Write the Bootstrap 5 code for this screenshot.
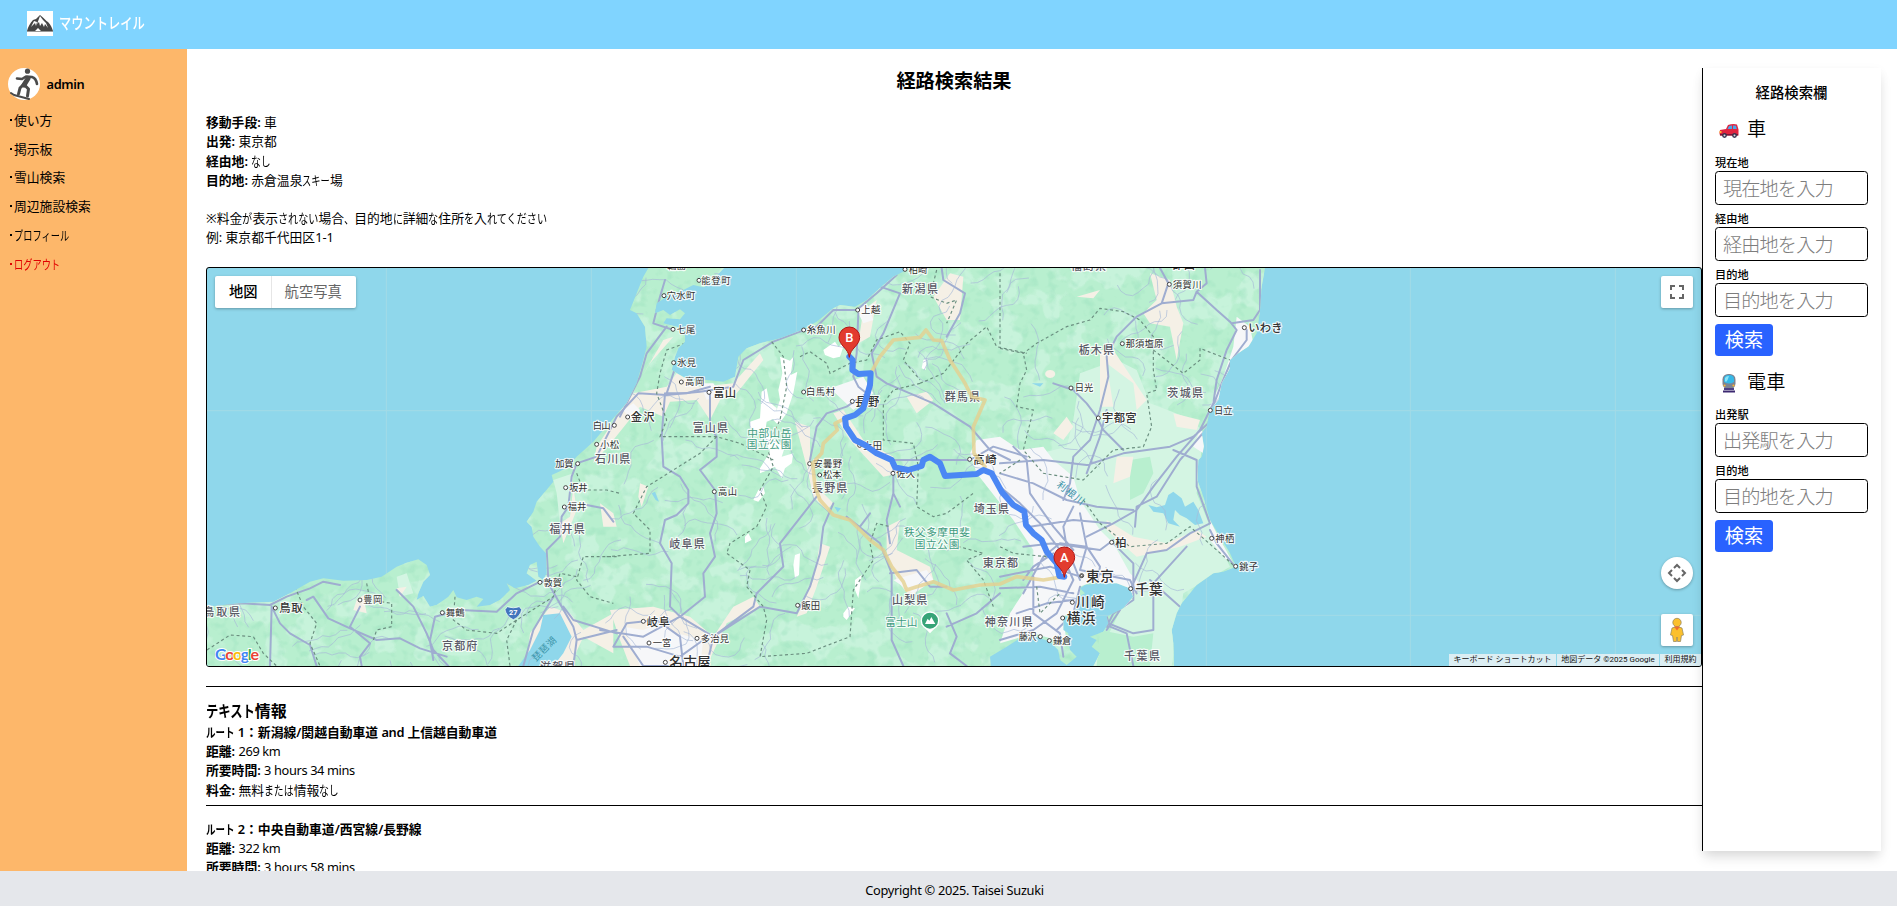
<!DOCTYPE html>
<html lang="ja">
<head>
<meta charset="utf-8">
<meta name="viewport" content="width=device-width, initial-scale=1">
<title>マウントレイル</title>
<link href="https://cdn.jsdelivr.net/npm/bootstrap@5.3.0/dist/css/bootstrap.min.css" rel="stylesheet">
<style>
html{font-size:12.8px}
body{font-family:"Noto Sans","Noto Sans CJK JP",sans-serif;font-size:12.8px;line-height:19.3px;color:#000;background:#fff;height:100vh;overflow:hidden}
b,.semi{font-weight:600}
/* condensed kana: --n is the number of characters, --s the width factor */
.k{display:inline-block;--s:.77;transform:scaleX(var(--s));transform-origin:0 50%;margin-right:calc(var(--n)*(var(--s) - 1)*1em);white-space:nowrap}
.k1{--n:1}.k2{--n:2}.k3{--n:3}.k4{--n:4}.k5{--n:5}.k6{--n:6}.k7{--n:7}
.en{letter-spacing:-.36px}
.top-bar{height:49px;background:#80d4ff;padding:0 0 2px 27px}
.brand{color:#fff;font-size:15.6px;font-weight:500;margin-left:6px;--s:.785!important}
.side{width:187px;background:#fdb76a;padding:19px 8px 0}
.side a{color:#000;text-decoration:none;height:28.8px;line-height:28.8px;display:block;white-space:nowrap}
.side a .k{--s:.72}
.side a::before{content:"";display:inline-block;width:2px;height:2px;background:currentColor;margin:0 2px 4px 2px}
.side a.out{color:#e10000}
.side .user{height:32px;margin-bottom:5.800px}
.side .user .semi{margin-left:6.500px;padding-top:2px}
.results{padding:18px 0 0 19px;overflow:hidden}
.results h1{font-size:19.2px;line-height:27px;font-weight:600;margin:0 0 19px}
.note{margin:19px 0 19.4px}
.note .k{--s:.79}
.map-box{height:400px;border:1px solid #000;border-radius:3px;background:#8fd7eb;position:relative;overflow:hidden}
.map-box>svg.canvas{width:100%;height:100%;display:block}
.ctl{position:absolute;background:#fff;box-shadow:0 1px 3px rgba(0,0,0,.3);border-radius:2px}
.ctl svg{display:block}
.sq{width:32px;height:32px}
.kind{left:8px;top:8px;height:32px;font-size:14.3px;color:#666;font-family:Roboto,"Noto Sans CJK JP",sans-serif}
.kind span{line-height:32px;padding:0 14px 0 14px}
.kind span+span{border-left:1px solid #e6e6e6;padding:0 14px 0 13px}
.kind .on{font-weight:500;color:#000;padding-right:13px}
.legal{position:absolute;right:0;bottom:0;height:12px;font:8px/12px Roboto,"Noto Sans CJK JP",sans-serif;color:#111}
.legal span{background:rgba(245,245,245,.75);text-align:center;white-space:nowrap}
.rule{border-top:1px solid #000;margin:0}
.panel{width:179px;margin:19px 16px 20px 0;border-left:1px solid #000;padding:14px 13px 0 12px;box-shadow:0 8px 12px -2px rgba(0,0,0,.13),0 2px 10px rgba(0,0,0,.04);background:#fff;position:relative}
.panel h2{font-size:14.4px;line-height:22px;font-weight:500;margin:0 0 10px;text-align:center}
.mode{font-size:19.2px;height:29px;line-height:29px;font-weight:350}
.mode svg{width:20px;height:20px;margin:2px 8px 0 4px}
.panel label{display:block;font-size:11.2px;line-height:16px;height:16px;font-weight:500}
.panel .form-control{height:34px;border:1px solid #000;border-radius:3.5px;padding:0 7px;font-size:19.2px;line-height:30px;margin-bottom:6px;letter-spacing:-.9px;color:#000}
.panel .form-control::placeholder{color:#7d7d7d;opacity:1;font-weight:300}
.panel .btn{background:#2962ff;color:#fff;height:32px;width:58px;border:0;border-radius:3.5px;padding:0;font-size:19.2px;line-height:30px;margin-top:7px;display:block}
.panel .form-control:has(+.btn){margin-bottom:0}
.foot{height:35px;background:#e5e7eb;line-height:19px;letter-spacing:-.3px;padding-left:12px}
.lbl text{paint-order:stroke;stroke:#fff;stroke-opacity:.85;stroke-width:7px;stroke-linejoin:round;font-family:Roboto,"Noto Sans CJK JP",sans-serif;fill:#4a4a4a}
.lbl .city{fill:#333}.lbl .big{fill:#333;font-weight:500}.lbl .pref{fill:#5a5a66;font-weight:500}
.lbl .park{fill:#3f9b7f}.lbl .water{fill:#3a93a8;stroke:none}
.lbl circle{fill:#fff;stroke:#444;stroke-width:3}
</style>
</head>
<body class="d-flex flex-column">
<header class="top-bar d-flex align-items-center flex-shrink-0">
  <svg width="26" height="25" viewBox="0 0 26 25"><path fill="#fff" d="M0 0h26v25H0z"/><path fill="#454545" d="M0 20c1-4 3-8 6-11l3-1 4-4c4 3 6 6 8 7 3 3 4 6 5 9z"/><path fill="#fff" d="m13 5 3 4 3 3 2 5-3-4-1 3-2-4-2 3-1-4-2 2zM7 10l-3 6 4-4 1 3 1-4zM8 20l3-3 3 3z"/><path stroke="#999" d="M0 20.500h26"/></svg>
  <span class="brand k k7">マウントレイル</span>
</header>
<div class="d-flex flex-grow-1 overflow-hidden">
  <nav class="side flex-shrink-0">
    <div class="user d-flex align-items-center">
      <svg width="32" height="32" viewBox="0 0 32 32"><circle cx="16" cy="16" r="16" fill="#fff"/><circle cx="19.500" cy="3.200" r="2.600" fill="#4a4a4a"/><g fill="none" stroke="#4a4a4a" stroke-linecap="round" stroke-linejoin="round"><path stroke-width="2.600" d="m9 10.500 5 .5 4-2.500 6 .5q4 1 5 7"/><path stroke-width="5" d="m20 10.500-4 6.500"/><path stroke-width="3" d="m16 16-4 4-1.500 6m6-9 4 4-1 7"/><path stroke-width="2" d="m3 25 3 2 15 4"/></g></svg>
      <span class="semi en">admin</span>
    </div>
    <a href="#">使い方</a>
    <a href="#">掲示板</a>
    <a href="#">雪山検索</a>
    <a href="#">周辺施設検索</a>
    <a href="#"><span class="k k6">プロフィール</span></a>
    <a href="#" class="out"><span class="k k5">ログアウト</span></a>
  </nav>
  <main class="results flex-grow-1">
    <h1 class="text-center">経路検索結果</h1>
    <div><b>移動手段:</b> 車</div>
    <div><b>出発:</b> 東京都</div>
    <div><b>経由地:</b> <span class="k k2">なし</span></div>
    <div><b>目的地:</b> 赤倉温泉<span class="k k3" style="--s:.72">スキー</span>場</div>
    <div class="note">※料金<span class="k k1">が</span>表示<span class="k k4">されない</span>場合<span class="k k1">、</span>目的地<span class="k k1">に</span>詳細<span class="k k1">な</span>住所<span class="k k1">を</span>入<span class="k k6">れてください</span><br>例: 東京都千代田区1-1</div>
    <div class="map-box">
      <svg class="canvas" viewBox="21 24 4482 1194" preserveAspectRatio="none">
        <defs>
          <clipPath id="landclip"><use href="#land"/></clipPath>
          <filter id="patches" x="0" y="0" width="1" height="1" color-interpolation-filters="sRGB"><feTurbulence type="fractalNoise" baseFrequency=".011" numOctaves="3" seed="8"/><feColorMatrix values="0 0 0 0 .79  0 0 0 0 .955  0 0 0 0 .865  14 0 0 0 -7.300"/></filter>
          <filter id="relief" x="0" y="0" width="1" height="1" color-interpolation-filters="sRGB"><feTurbulence type="fractalNoise" baseFrequency=".035" numOctaves="2" seed="3"/><feColorMatrix values="0 0 0 0 .58  0 0 0 0 .87  0 0 0 0 .73  0 4 0 0 -2.100"/></filter>
        </defs>
        <g fill="none" stroke="#a3dbe6" stroke-width="3"><path d="M559 24V1218M1174 24V1218M1789 24V1218M3019 24V1218M3631 24V1218M4246 24V1218M21 452H4503M21 1066H4503"/></g>
        <path id="land" fill="#b8efcf" d="M21 1040 120 1030 220 1025 270 1000 330 965 370 955 430 962 500 960 545 950 590 920 620 908 655 898 680 915 690 945 670 965 655 1000 650 1020 670 1008 690 1040 710 1035 745 1010 760 990 770 1012 800 1020 830 1010 850 1017 830 1040 870 1035 900 1020 930 990 920 970 945 985 985 975 1010 962 980 940 990 915 1010 905 1015 950 1030 960 1040 940 1038 880 1020 860 1000 830 995 800 980 785 1000 755 1010 725 1060 665 1055 645 1100 625 1130 590 1180 545 1240 475 1280 430 1310 370 1330 300 1340 260 1335 200 1310 160 1290 150 1310 100 1330 50 1345 24H1572L1555 42 1530 70 1510 82 1480 75 1450 90 1400 110 1370 130 1365 160 1390 150 1410 165 1440 148 1455 160 1440 178 1400 175 1390 190 1430 200 1455 220 1455 245 1435 265 1425 290 1415 330 1440 345 1470 360 1520 360 1570 365 1605 350 1610 320 1615 290 1640 265 1680 250 1740 235 1800 212 1850 185 1900 145 1920 135 1965 140 2000 120 2050 75 2080 50 2110 35 2125 24H3195L3185 80 3180 150 3175 190 3170 220 3145 260 3115 280 3090 300 3090 325 3065 370 3055 420 3030 450 3020 500 3005 520 3012 560 3005 590 2995 600 2992 660 3010 710 3030 780 3060 830 3090 880 3108 920 3070 935 3040 940 2990 975 2945 1030 2930 1060 2915 1110 2920 1150 2922 1218H2680L2700 1180 2675 1160 2690 1140 2670 1130 2710 1115 2725 1090 2720 1070 2770 1045 2800 1010 2790 985 2750 970 2700 970 2655 975 2640 985 2655 1000 2635 1010 2640 1040 2615 1060 2590 1075 2590 1110 2605 1120 2605 1140 2610 1170 2630 1190 2600 1215 2580 1200 2575 1170 2550 1145 2510 1130 2460 1135 2420 1160 2370 1190 2372 1218H21z"/>
        <g clip-path="url(#landclip)">
          <rect x="21" y="24" width="3200" height="1194" filter="url(#patches)" opacity=".85"/>
          <rect x="21" y="24" width="3200" height="1194" filter="url(#relief)" opacity=".35"/>
          <g fill="#d4f5e3">
            <path d="M2400 600 2480 590 2600 560 2620 480 2640 340 2750 300 2810 330 2850 430 2980 480 3010 520 2990 700 3030 800 3090 920 2950 1000 2915 1218H2680L2790 990 2640 850 2600 700z"/>
            <path d="M1060 660 1120 640 1110 730 1080 790 1070 700zM590 950 620 940 640 1000 600 1010z"/>
          </g>
          <path fill="#b8efcf" d="M2790 600 2850 590 2860 640 2830 700 2790 720zM2700 1110 2800 1130 2860 1120 2850 1218H2690z"/>
          <g fill="#f5f0e6">
            <path d="M1190 560 1250 470 1300 400 1400 380 1430 340 1500 380 1600 370 1680 280 1690 300 1610 400 1560 420 1530 480 1490 420 1410 425 1390 470 1320 440 1240 540 1180 610zM1390 240 1420 230 1350 310 1320 360zM1785 485 1830 500 1830 600 1860 690 1900 730 1880 750 1840 710 1820 620zM1900 460 1930 450 1990 540 2080 590 2100 640 2050 650 1950 540zM2060 800 2100 780 2090 870 2190 920 2200 960 2130 1010 2090 960 2060 880zM1860 850 1890 860 1850 980 1820 1060 1790 1070 1840 960zM1230 1050 1360 1040 1470 1070 1540 1130 1600 1040 1660 1010 1680 1040 1580 1090 1520 1218H1290L1260 1140zM2120 410 2180 395 2200 420 2150 460zM2200 110 2250 40 2290 50 2280 180 2240 180zM1990 150 2030 120 2010 230 1975 250zM1320 670 1345 680 1325 740 1315 710z"/>
            <path d="M2850 40 2910 60 2930 140 2950 190 2930 300 2910 200 2850 190 2830 160 2870 120zM2700 270 2740 270 2840 420 2810 450 2800 370 2720 310 2740 440 2700 440zM2750 590 2800 590 2790 650 2740 670zM2720 780 2800 830 2900 850 2990 810 3020 830 2940 860 2810 890 2720 810zM2600 470 2620 500 2590 540 2560 520zM2920 460 3000 480 2990 510 2930 500zM2630 110 2700 90 2680 115zM2550 330a15 12 0 1 0 1 0zM1080 790 1110 770 1120 680 1130 750 1090 850zM1200 730 1240 760 1250 800 1210 800zM470 1020 490 1005 500 1060 460 1050zM590 985 620 980 600 1010z"/>
            <path d="M990 1120 1050 1040 1110 1060 1150 1110 1240 1060V1180L1150 1130 1110 1218H980z"/>
          </g>
          <g fill="#f6f7f9">
            <path d="M2400 530 2460 570 2530 560 2560 600 2620 650 2640 720 2700 810 2740 850 2790 940 2820 970 2780 1040 2690 960 2640 980 2640 1040 2590 1070 2600 1150 2500 1120 2400 1150 2430 1060 2500 950 2500 870 2440 780 2330 640 2310 580 2330 540z"/>
            <path d="M1270 1100 1330 1110 1380 1090 1430 1120 1510 1140 1500 1218H1320zM1890 385 1990 350 2020 400 1960 450zM2080 960 2180 930 2200 960 2140 1000zM1970 150 2000 130 2020 180 1990 190zM3110 170 3150 200 3160 250 3100 290 3080 350 3050 440 3030 440 3070 350 3100 260zM3000 510 3015 520 3010 580 2980 560zM3030 780 3055 830 3100 910 3080 900 3030 840zM1270 450 1300 430 1320 450 1300 490zM1500 370 1540 370 1560 400 1520 420z"/>
            <path fill="#fff" d="m1740 290 30 12 10-12-8 55 20-10-12 65-20 60-25 35-15-15 20-60-5-30 12-50zM1685 395l15-10 8 40 22 20-5 30-25 10-5 35 15 5 30 30 20-10-15 45 35-10-5 30-20 15-10 30-20-35-45 20 0-15 30-50-25-60-35-10 0-20 30-10zM1870 270l35-25 10 15 20-15-15 45-20 5-25-10zM1675 690l15-10 5 20-20 25-15-5zM1635 830l10-10 10 20-20 10zM1785 885l15-5-3 65-12 10-5-40zM1965 960l20-15-10 70-10-25zM1930 1060l15-20 20 5-25 35-10-10zM2170 300l12-5-5 35-12-5z"/>
          </g>
          <g fill="#8fd7eb">
            <path d="M1030 1065 1080 1060 1115 1130 1090 1180 1060 1218H955L990 1170 1020 1110zM2845 735 2870 742 2895 735 2905 705 2920 695 2945 715 2955 740 2980 725 2995 750 3010 790 2985 795 2960 775 2940 765 2925 750 2920 780 2940 800 2905 790 2890 760 2860 755zM2495 370 2530 370 2520 380zM1903 740l20 5-10 12zM1355 700l10-5 12 30-10-5z"/>
          </g>
          <g id="lanes" fill="none" stroke="#a7b9d8" stroke-width="2.500" opacity=".8"></g>
          <g fill="none" stroke="#9fadd0" stroke-width="6" stroke-linejoin="round" stroke-linecap="round">
            <path d="M21 1035 130 1030 210 1035 260 1010 330 985 370 965 420 975M215 1040 240 1090 270 1120 330 1155 350 1218M215 1040 210 1218M320 1020 340 1010 385 1075 450 1105 530 1140 600 1135 660 1165 740 1190M480 1040 450 1100 510 1150 480 1190 485 1218M590 990 640 1040 680 1120 700 1170 745 1218M700 1200 690 1140 705 1070 780 1050 890 1055 950 1000 1015 968 1045 960 1040 870 1080 830 1085 770 1105 740 1115 650 1130 610 1190 590 1250 470 1315 400 1400 405 1500 395 1600 380 1630 300 1720 245 1800 215 1850 200 1900 150 1970 150 2030 100 2090 45"/>
            <path d="M1045 970 1085 1040 1120 1100 1130 1140 1120 1218M1060 1010 1000 1110 970 1218M1130 1140 1250 1110M1160 735 1210 745 1240 785M1090 1040 1120 1080 1250 1120M1120 400 1090 440M1395 400 1385 530 1390 620 1440 650 1465 690 1465 730 1430 765 1395 780 1380 850 1415 910 1410 1040 1440 1070 1330 1130 1200 1110M1530 400 1530 500 1550 530 1550 590 1500 630 1545 690 1550 760 1530 820 1545 890 1510 940 1515 1010 1440 1070M1395 60 1380 110 1360 190 1420 210M1400 200 1340 280 1320 350 1260 470M1430 310 1400 400 1460 400 1530 380"/>
            <path d="M2020 24 2040 80 2100 100 2050 220 2015 280 2030 350 2060 370 2200 430 2310 500 2370 570 2430 600M2225 24 2230 60 2295 100 2280 160 2240 230M1975 160 1970 280 1960 350 1975 380 2000 400 1940 440 1880 460 1850 500 1830 600M1900 730 1870 800 1860 880 1830 980 1790 1060 1680 1040 1540 1130 1440 1070M1850 710 1740 850 1750 920 1670 1000 1660 1040 1540 1130 1520 1218M1940 770 2040 850 2075 940 2075 1140 2110 1218M2070 940 2150 930 2190 980 2240 980M2080 630 2080 700 2060 780 2070 850M2080 600 2210 600 2310 600 2380 560 2480 590M2240 1060 2270 1130 2250 1180 2300 1218M2240 1100 2330 1060 2400 1000M1270 1130 1330 1218 1450 1218 1440 1130 1370 1080 1280 1090 1240 1160 1340 1160 1440 1190 1510 1140M1980 800 2010 760M2080 700 2100 740"/>
            <path d="M2880 24 2905 70 2885 130 2810 170 2750 230 2720 290 2725 350 2700 450 2670 540 2620 590 2610 670 2590 720M3015 24 3020 70 2990 95 2980 120 2885 130M2990 95 3050 150 3090 185 3110 210 3080 270 3050 360 3040 430 3000 510 2930 590 2860 680 2810 750 2740 790 2660 830M3180 30 3180 150 3160 180 3095 190M3140 210 3140 240 3095 300 3065 370 3035 450 3025 490 2980 530 2910 560 2770 580 2660 615 2530 600 2400 610M2560 370 2620 390 2660 430 2690 470 2710 510 2770 570M2720 450 2700 530 2660 640M3025 500 2940 600 2870 710 2810 740 2805 800M2920 570 2990 600 2990 680 3030 790 2970 820 2900 870 2840 880 2800 970 2760 1050 2720 1110M3030 810 3050 850 3105 920M2740 850 2800 910 2800 1020 2740 1060 2720 1100M2700 1080 2800 1120 2860 1110 2860 970 2960 860M2640 1040 2720 1070 2730 1100 2780 1120 2800 1218M2850 960 2940 1040"/>
            <path d="M2400 640 2500 670 2600 720 2690 740 2800 750M2400 680 2460 730 2520 790 2580 870 2620 960M2620 740 2590 800 2600 860 2640 960M2640 760 2660 860 2640 930M2490 800 2620 780 2730 790M2470 860 2560 850 2700 870 2740 840M2470 1000 2530 890 2580 850 2660 860 2700 920 2690 980M2400 950 2550 920 2640 950M2400 985 2520 980 2620 1000M2450 1060 2540 1030 2620 1020M2400 1140 2500 1110 2570 1060 2620 960M2500 950 2500 1060 2580 1120 2590 1190M2640 930 2790 960 2810 1000M2640 980 2620 1060 2570 1110M2560 880 2500 920 2470 960M2440 560 2480 600 2490 700 2560 800 2620 870"/>
          </g>
          <path fill="none" stroke="#6b8f80" stroke-width="3.500" stroke-dasharray="9 8" d="M21 1170 90 1125 160 1130 190 1180 230 1218M285 980 310 1040 350 1090 330 1150 360 1218M500 970 510 1020 575 1030 575 1100 530 1110 520 1140M765 1010 760 1080 800 1110 890 1120 950 1080 1060 1010 1080 940 1130 950M950 1080 920 1140 930 1218M1130 640 1150 690 1220 690 1260 700M1250 890 1150 890 1130 960 1170 1010 1240 1030M1455 250 1400 270 1380 340 1370 400 1400 480 1380 530 1550 530 1620 550 1720 600M1715 245 1750 290 1760 380 1740 480 1700 560 1720 620 1680 690 1700 740 1670 800 1590 850 1580 880 1650 930 1640 980 1690 1040 1700 1080 1680 1190 1820 1180 1950 1130 1960 990 2020 900 2010 850 2030 790 2070 800M1550 530 1500 580 1340 680 1300 760 1350 810 1350 880 1220 890M1800 290 1830 275 1880 310 1890 340 1950 310 2000 300 2030 240 2100 215 2130 250 2110 300 2160 360M2160 370 2080 390 2050 430 2050 540 2140 550 2155 620 2150 740 2200 770 2240 760 2320 700M2160 370 2230 340 2300 250 2360 200 2390 260 2480 280M2240 850 2350 880 2300 900 2350 960 2380 1040M2400 265 2470 280 2510 250 2600 200 2670 180 2700 145 2770 155 2820 180 2860 230 2860 330 2870 390 2840 400 2855 500 2830 560 2740 570 2690 620 2650 660 2530 640 2470 570 2500 450 2450 440 2460 370 2480 330 2470 280M2860 270 2950 340 3000 300 3000 265 3090 300M2650 720 2700 790 2790 860 2900 850 2970 800 3050 870 3105 920M2400 40V260M2210 30 2190 110 2240 130 2270 120 2240 190M2460 600 2400 640M2400 860 2440 880 2540 890M2510 980 2520 1060 2580 1000"/>
        </g>
        <g class="lbl" id="labels"></g>
        <path fill="none" stroke="#e5cf8e" stroke-width="11" stroke-opacity=".8" stroke-linejoin="round" stroke-linecap="round" d="M2015 335 2040 290 2080 240 2160 232 2178 210 2200 240 2225 242 2250 300 2295 370 2315 410 2355 420 2320 500 2322 580 2355 620M1930 478 1905 490 1912 510 1870 550 1865 580 1838 610 1845 680 1860 720 1900 765 1950 780 2010 840 2050 870 2075 920 2110 965 2120 990 2150 980 2200 965 2260 990 2340 975 2400 972 2450 950 2530 960 2590 950"/>
        <path fill="none" stroke="#4b87f4" stroke-width="18" stroke-linejoin="round" stroke-linecap="round" d="M1948 290 1958 300 1957 330 1975 342 2012 340 2010 375 2000 410 1990 445 1965 465 1935 475 1938 500 1965 540 1995 555 2030 580 2075 600 2085 622 2125 630 2165 618 2170 600 2190 590 2220 610 2235 648 2330 642 2350 630 2375 640 2405 695 2440 735 2473 755 2478 795 2500 820 2525 840 2540 875 2570 910 2578 948 2593 950"/>
        <g transform="translate(840 1040)"><path fill="#4275bd" stroke="#fff" stroke-width="2" d="M82 0q18 7 36 0l7 9q-4 20-25 30-21-10-25-30z"/><text x="100" y="26" font-size="22" font-weight="700" fill="#fff" text-anchor="middle" font-family="Roboto">27</text></g>
        <g transform="translate(2190 1082)"><path fill="#fff" d="M-27 10 0 38 27 10z"/><circle r="26" fill="#37a478" stroke="#fff" stroke-width="4"/><path fill="#fff" d="M-15 10-7-6-2 0 4-11 16 10z"/></g>
        <g fill="#e23b2e" stroke="#b31412" stroke-width="3"><path d="M2593 952c-3-28-31-35-31-60a31 31 0 0 1 62 0c0 25-28 32-31 60zM1948 292c-3-28-31-35-31-60a31 31 0 0 1 62 0c0 25-28 32-31 60z"/></g>
        <g fill="#fff" font-family="Roboto" font-size="39" font-weight="500" text-anchor="middle"><text x="2593" y="905">A</text><text x="1948" y="245">B</text></g>
      </svg>
      <div class="ctl kind d-flex"><span class="on">地図</span><span>航空写真</span></div>
      <div class="ctl sq" style="right:8px;top:8px"><svg width="32" height="32" fill="none" stroke="#666" stroke-width="2"><path d="M10 14v-4h4M18 10h4v4M22 18v4h-4M14 22h-4v-4"/></svg></div>
      <div class="ctl sq rounded-circle" style="right:8px;bottom:77px"><svg width="32" height="32" fill="none" stroke="#666" stroke-width="2"><path d="m13 11 3-3 3 3M13 21l3 3 3-3M11 13l-3 3 3 3M21 13l3 3-3 3"/></svg></div>
      <div class="ctl sq" style="right:8px;bottom:20px"><svg width="32" height="32"><g fill="#fbc02d" stroke="#8d8360" stroke-width=".7"><path d="M11 14q5-3 10 0l1.500 7-2 .5-1 6h-3L16 23l-.5 4.500h-3l-1-6-2-.5z"/><circle cx="16" cy="8.500" r="4.200"/></g><path fill="#ef6c30" d="m13 12.500 3 4 3-4z"/></svg></div>
      <svg class="position-absolute" style="left:8px;bottom:1px" width="50" height="20"><text y="15" font-family="Lato" font-size="16" font-weight="700" stroke="#fff" stroke-width="2" paint-order="stroke" textLength="44"><tspan fill="#4285f4">G</tspan><tspan fill="#ea4335">o</tspan><tspan fill="#fbbc05">o</tspan><tspan fill="#4285f4">g</tspan><tspan fill="#34a853">l</tspan><tspan fill="#ea4335">e</tspan></text></svg>
      <div class="legal d-flex"><span style="width:107px">キーボード ショートカット</span><span style="width:102px;margin-left:1px">地図データ ©2025 Google</span><span style="width:41px;margin-left:1px">利用規約</span></div>
    </div>
    <hr class="rule opacity-100" style="margin-top:19px">
    <div style="font-size:16px;line-height:24px;margin-top:11.500px"><b><span class="k k4">テキスト</span>情報</b></div>
    <div><b><span class="k k3" style="--s:.74">ルート</span> 1：新潟線/関越自動車道 <span class="en">and</span> 上信越自動車道</b></div>
    <div><b>距離:</b> <span class="en">269 km</span></div>
    <div><b>所要時間:</b> <span class="en">3 hours 34 mins</span></div>
    <div><b>料金:</b> 無料<span class="k k3">または</span>情報<span class="k k2">なし</span></div>
    <hr class="rule opacity-100" style="margin-top:5px">
    <div style="margin-top:14px"><b><span class="k k3" style="--s:.74">ルート</span> 2：中央自動車道/西宮線/長野線</b></div>
    <div><b>距離:</b> <span class="en">322 km</span></div>
    <div><b>所要時間:</b> <span class="en">3 hours 58 mins</span></div>
  </main>
  <aside class="panel flex-shrink-0">
    <h2>経路検索欄</h2>
    <div class="mode d-flex align-items-center"><svg viewBox="0 0 20 20"><path fill="#e0243f" d="M1 10 7 9l2-4q5-1.500 9-.5l1.500 5v6H1q-1-3 0-5.500z"/><path fill="#4aa5e8" d="m8.500 9 1.500-3 3-.4V9zM14 5.500l3 .2.800 3.300H14z"/><path fill="#7b1738" d="M1 14h18v1.500H1z"/><circle cx="5.500" cy="15.500" r="2.400" fill="#39324e"/><circle cx="15.500" cy="15.500" r="2.400" fill="#39324e"/><circle cx="5.500" cy="15.500" r="1" fill="#ddd"/><circle cx="15.500" cy="15.500" r="1" fill="#ddd"/><path fill="#ffb52e" d="M.5 11h2v2h-2z"/></svg>車</div>
    <div style="height:12px"></div>
    <label>現在地</label><input class="form-control" placeholder="現在地を入力">
    <label>経由地</label><input class="form-control" placeholder="経由地を入力">
    <label>目的地</label><input class="form-control" placeholder="目的地を入力">
    <button class="btn">検索</button>
    <div style="height:11.400px"></div>
    <div class="mode d-flex align-items-center"><svg viewBox="0 0 20 20"><rect x="3.500" y="1" width="13" height="15" rx="5.500" fill="#7d8492"/><path fill="#35b8e8" d="M5 6q0-4 5-4t5 4v3q-5 3-10 0z"/><path fill="#8be3f7" d="M6 5q1-2 4-2-1 4-3 6l-1-1z"/><circle cx="5.500" cy="12.500" r="1.100" fill="#ffb52e"/><circle cx="14.500" cy="12.500" r="1.100" fill="#ffb52e"/><path fill="#4c3f86" d="M5 15h10v2H5z"/><path fill="#3b2870" d="M4 17.500h12v2H4z"/></svg>電車</div>
    <div style="height:11px"></div>
    <label>出発駅</label><input class="form-control" placeholder="出発駅を入力">
    <label>目的地</label><input class="form-control" placeholder="目的地を入力">
    <button class="btn">検索</button>
  </aside>
</div>
<footer class="foot d-flex align-items-center justify-content-center flex-shrink-0 position-relative"><span style="padding-top:3px">Copyright © 2025. Taisei Suzuki</span></footer>
<script src="https://cdn.jsdelivr.net/npm/bootstrap@5.3.0/dist/js/bootstrap.bundle.min.js"></script>
<script>
const NS = 'http://www.w3.org/2000/svg';
// [left, middle, text, width, class, town dot x]
const places = [
 [10,1056,'鳥取県',110,'pref'],[238,1044,'鳥取',70,'big',226],[490,1020,'豊岡',57,'city',480],[738,1058,'舞鶴',56,'city',727],
 [726,1157,'京都府',106,'pref'],[1031,967,'敦賀',55,'city',1020],[1048,808,'福井県',106,'pref'],[1103,741,'福井',56,'city',1093],
 [1108,683,'坂井',55,'city',1097],[1066,611,'加賀',55,'city',1133],[1185,597,'石川県',106,'pref'],[1201,553,'小松',56,'city',1190],
 [1178,496,'白山',54,'city',1243],[1292,471,'金沢',72,'big',1283],[1020,1222,'滋賀県',106,'pref'],
 [1504,61,'能登町',88,'city',1497],[1400,107,'穴水町',86,'city',1392],[1430,208,'七尾',56,'city',1419],[1432,308,'氷見',56,'city',1421],
 [1455,366,'高岡',58,'city',1444],[1540,397,'富山',68,'big',1527],[1478,503,'富山県',106,'pref'],[1642,520,'中部山岳',132,'park'],[1640,553,'国立公園',134,'park'],
 [1820,210,'糸魚川',87,'city',1811],[1984,150,'上越',57,'city',1973],[2106,87,'新潟県',108,'pref'],[2126,28,'柏崎',56,'city',2115],
 [1818,396,'白馬村',87,'city',1811],[1966,424,'長野',72,'big',1957],[1990,556,'上田',56,'city',1979],[1840,611,'安曇野',86,'city',1829],
 [1869,645,'松本',56,'city',1859],[1836,684,'長野県',106,'pref'],[2089,640,'佐久',56,'city',2079],[2234,411,'群馬県',106,'pref'],
 [2320,598,'高崎',70,'big',2309],[1554,695,'高山',57,'city',1543],[1408,851,'岐阜県',106,'pref'],[1340,1084,'岐阜',70,'big',1330],
 [1358,1149,'一宮',56,'city',1347],[1502,1135,'多治見',85,'city',1491],[1408,1207,'名古屋',124,'huge',1396],[1804,1036,'飯田',56,'city',1793],
 [2076,1021,'山梨県',106,'pref'],[2056,1087,'富士山',96,'park'],[2112,817,'秩父多摩甲斐',198,'park'],[2144,851,'国立公園',134,'park'],
 [2321,747,'埼玉県',106,'pref'],[2348,909,'東京都',106,'pref'],[2354,1087,'神奈川県',144,'pref'],[2456,1130,'藤沢',54,'city',2521],
 [2559,1142,'鎌倉',55,'city',2548],[2600,1074,'横浜',86,'huge',2588],[2628,1027,'川崎',86,'huge',2617],[2658,947,'東京',84,'huge',2645],
 [2806,986,'千葉',82,'huge',2792],[2746,847,'柏',34,'big',2735],[2772,1188,'千葉県',108,'pref'],[3046,835,'神栖',57,'city',3035],
 [3118,919,'銚子',56,'city',3107],[3042,451,'日立',56,'city',3031],[2902,400,'茨城県',107,'pref'],[2706,474,'宇都宮',104,'big',2695],
 [2624,384,'日光',56,'city',2613],[2636,270,'栃木県',106,'pref'],[2777,251,'那須塩原',113,'city',2767],[2918,73,'須賀川',87,'city',2908],
 [3145,203,'いわき',103,'big',3133],[2612,18,'福島県',106,'pref'],[2915,14,'郡山',70,'big'],[1402,18,'輪島',56,'city']
];
const size = {pref:33, city:28, big:34, huge:41, park:32, water:28};
const add = (tag, attrs, parent) => {
  const e = document.createElementNS(NS, tag);
  for (const k in attrs) e.setAttribute(k, attrs[k]);
  return parent.appendChild(e);
};
const layer = document.getElementById('labels');
for (const [x, y, t, w, c, dot] of places) {
  if (dot) add('circle', {cx:dot, cy:y, r: 6}, layer);
  const s = size[c];
  add('text', {x, y:y + s * .37, class: c === 'huge' ? 'big' : c, 'font-size':s, textLength:w}, layer).textContent = t;
}
add('circle', {cx:2645, cy:947, r:3.5}, layer);
add('text', {class:'water','font-size':28,textLength:88,transform:'translate(1008 1205) rotate(-45)'}, layer).textContent = '琵琶湖';
add('text', {class:'water','font-size':30,textLength:96,transform:'translate(2568 678) rotate(38)'}, layer).textContent = '利根川';
// local roads: seeded walks that bend gently across the land
let seed = 11;
const rnd = () => (seed = (seed * 16807) % 2147483647) / 2147483647;
let d = '';
for (let i = 0; i < 210; i++) {
  let x = i < 30 ? 20 + rnd() * 1000 : 1000 + rnd() * 2150, y = i < 30 ? 1000 + rnd() * 218 : rnd() * 1218, a = rnd() * 6.3;
  d += `M${x | 0} ${y | 0}`;
  for (let j = 0; j < 9; j++) {
    a += (rnd() - .5) * 1.5;
    x += Math.cos(a) * 20; y += Math.sin(a) * 20;
    d += `L${x | 0} ${y | 0}`;
  }
}
add('path', {d}, document.getElementById('lanes'));
</script>
</body>
</html>
